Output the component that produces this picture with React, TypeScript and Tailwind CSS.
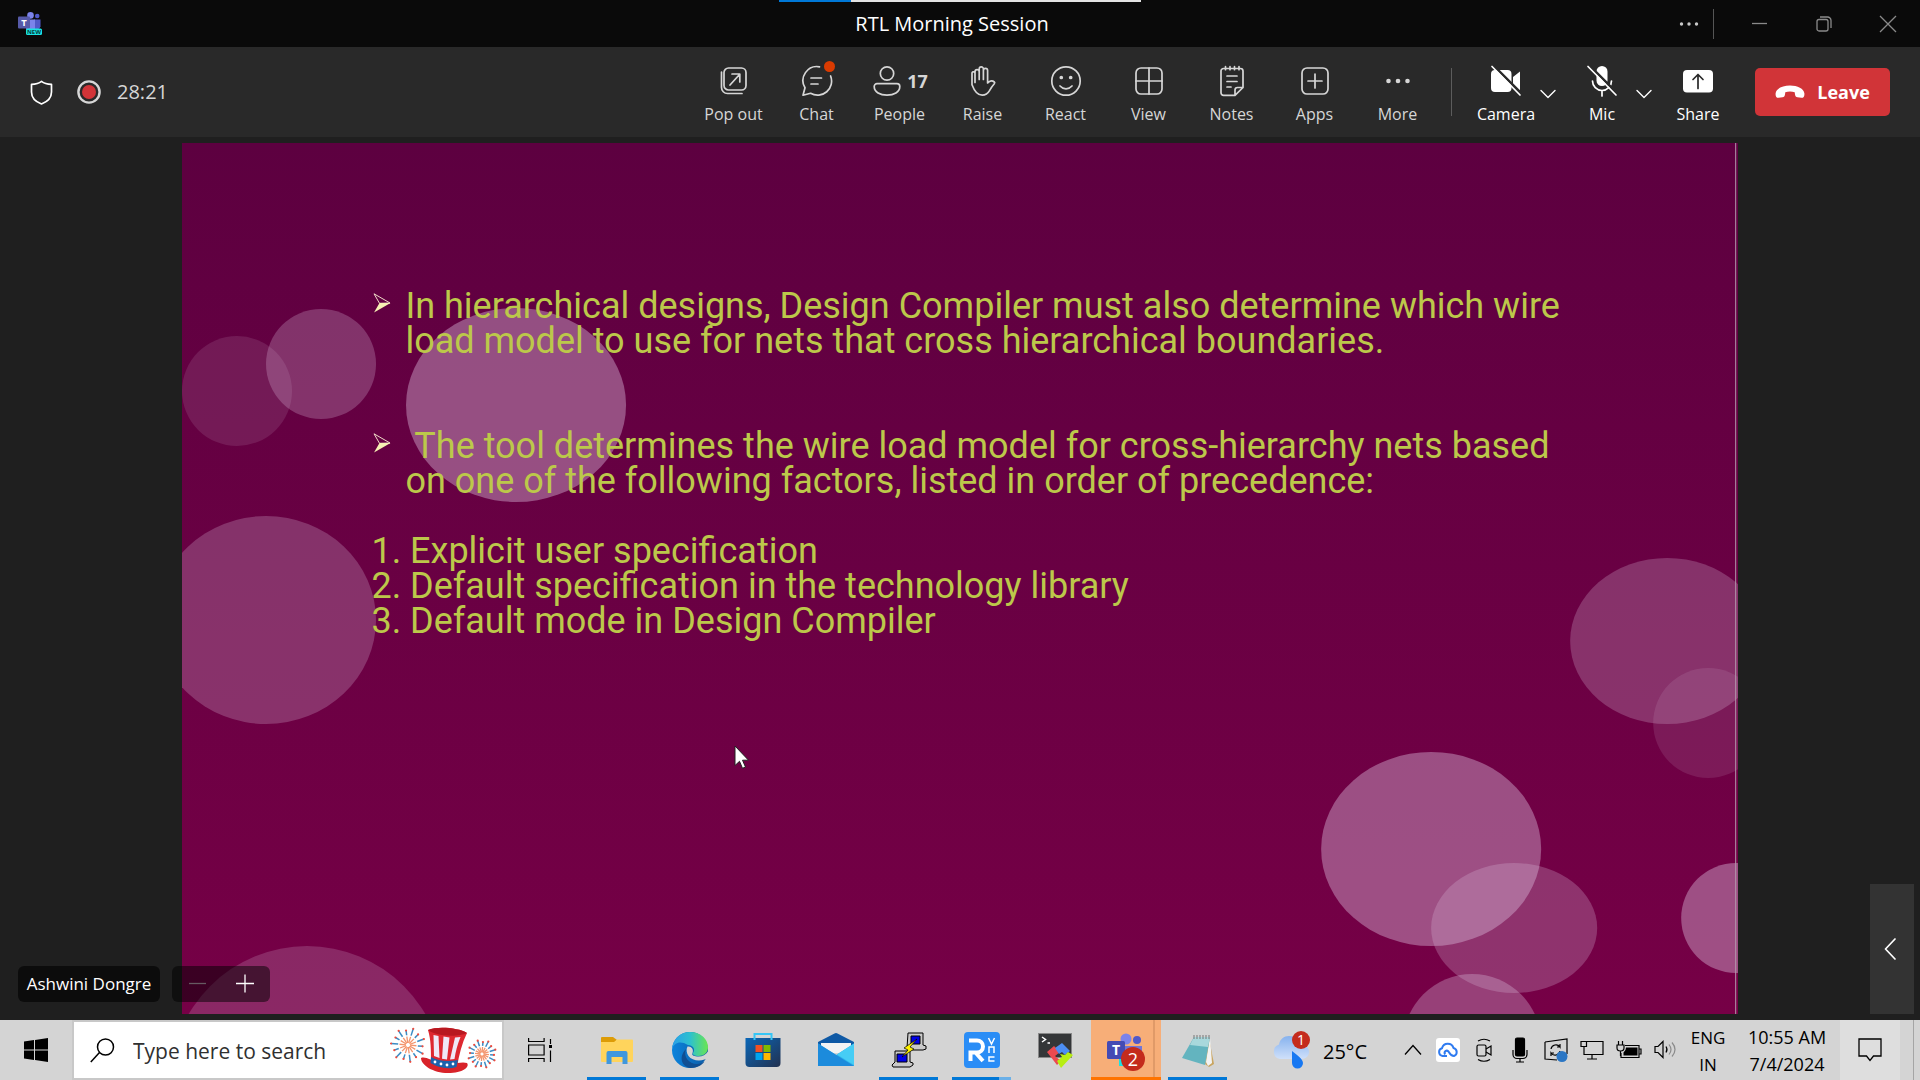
import type { ReactNode } from "react";

const line = {
  fill: "none",
  stroke: "currentColor",
  strokeWidth: 1.7,
  strokeLinecap: "round" as const,
  strokeLinejoin: "round" as const,
};

function Icon({ children }: { children: ReactNode }) {
  return (
    <svg className="h-8 w-8" viewBox="0 0 32 32" aria-hidden="true" {...line}>
      {children}
    </svg>
  );
}

function ToolButton({ label, children }: { label: string; children: ReactNode }) {
  return (
    <button className="flex w-[83px] flex-col items-center gap-[5px] pt-1.5 text-[#d6d6d6]">
      <span className="relative flex h-8 items-center gap-1">{children}</span>
      <span className="text-base leading-6">{label}</span>
    </button>
  );
}

function DeviceButton({ label, menu, children }: { label: string; menu?: string; children: ReactNode }) {
  return (
    <div className="flex items-center text-white">
      <button className="flex w-[60px] flex-col items-center gap-[5px] pt-1.5">
        <span className="flex h-8 items-center">{children}</span>
        <span className="text-base leading-6">{label}</span>
      </button>
      {menu && (
        <button aria-label={menu} className="flex w-6 items-center justify-center pt-1">
          <svg width="16" height="10" viewBox="0 0 16 10" {...line} strokeWidth={1.4}>
            <path d="M1 1.5 8 8.5 15 1.5" />
          </svg>
        </button>
      )}
    </div>
  );
}

function TeamsLogo() {
  return (
    <svg width="25" height="24" viewBox="0 0 25 24" aria-label="Teams" role="img">
      <circle cx="12.5" cy="3.4" r="3.3" fill="#7b83eb" />
      <circle cx="19.2" cy="4" r="2.3" fill="#5059c9" />
      <path d="M16 7.5h6.5v7a4 4 0 0 1-6.5 2z" fill="#5059c9" />
      <path d="M8 7.5h9v9.500a4.600 4.600 0 0 1-9 0z" fill="#7b83eb" />
      <rect x="0" y="4.500" width="12" height="12" rx="1" fill="#565aa8" />
      <text x="6" y="14" textAnchor="middle" fontSize="9.500" fontWeight="700" fill="#fff">T</text>
      <rect x="8" y="16.500" width="16" height="6.500" rx="1.500" fill="#19e3e3" />
      <text x="16" y="22" textAnchor="middle" fontSize="6" fontWeight="700" fill="#063b3b">NEW</text>
    </svg>
  );
}

function TitleBar() {
  return (
    <header className="relative flex h-[47px] items-center bg-[#0a0a0a] text-white">
      <div className="flex flex-1 items-center pl-[18px]">
        <TeamsLogo />
      </div>
      <h1 className="mr-[34px] text-xl leading-6">RTL Morning Session</h1>
      <div className="flex flex-1 items-center justify-end text-[#8a8a8a]">
        <button aria-label="Window options" className="flex w-12 justify-center text-[#c8c8c8]">
          <svg width="20" height="6" viewBox="0 0 20 6" fill="currentColor">
            <circle cx="2.500" cy="3" r="1.700" /><circle cx="10" cy="3" r="1.700" /><circle cx="17.500" cy="3" r="1.700" />
          </svg>
        </button>
        <span className="h-[30px] w-px bg-[#555]" />
        <button aria-label="Minimize" className="ml-[14px] flex w-16 justify-center">
          <svg width="16" height="16" viewBox="0 0 16 16" stroke="currentColor" strokeWidth="1.3"><path d="M0 7.500h15" /></svg>
        </button>
        <button aria-label="Restore" className="flex w-16 justify-center">
          <svg width="16" height="16" viewBox="0 0 16 16" fill="none" stroke="currentColor" strokeWidth="1.3">
            <rect x="1" y="3.500" width="11" height="11.500" rx="2" /><path d="M4 1h7.500a3.500 3.500 0 0 1 3.500 3.500V12" />
          </svg>
        </button>
        <button aria-label="Close" className="flex w-16 justify-center">
          <svg width="18" height="18" viewBox="0 0 18 18" stroke="currentColor" strokeWidth="1.3"><path d="M1 1l16 16M17 1 1 17" /></svg>
        </button>
      </div>
      <div className="absolute inset-x-0 top-0 flex justify-center">
        <span className="h-0.5 w-[72px] bg-[#0078d7]" />
        <span className="h-0.5 w-[290px] bg-[#e3e3e3]" />
      </div>
    </header>
  );
}

function Toolbar() {
  return (
    <nav aria-label="Meeting controls" className="flex h-[90px] items-center bg-[#292929] pr-[30px] pl-[30px] text-[#d6d6d6]">
      <svg width="23" height="25" viewBox="0 0 23 25" {...line} stroke="#fff" aria-hidden="true">
        <path d="M11.500 1.300C9 3.300 5.500 4.200 1.500 4.400V12c0 5.600 4 9.700 10 12 6-2.300 10-6.400 10-12V4.400c-4-.2-7.500-1.100-10-3.100z" />
      </svg>
      <svg className="ml-6" width="24" height="24" viewBox="0 0 24 24" aria-label="Recording" role="img">
        <circle cx="12" cy="12" r="10.600" fill="none" stroke="#d6d6d6" strokeWidth="2.400" />
        <circle cx="12" cy="12" r="7" fill="#d13438" />
      </svg>
      <time className="ml-4 text-xl leading-6">28:21</time>

      <div className="ml-auto flex items-center">
        <ToolButton label="Pop out">
          <Icon>
            <rect x="6" y="3" width="22" height="22" rx="4.500" />
            <path d="M3.500 7v15.500a6 6 0 0 0 6 6H24M12 20l9.500-10.500M14 9h7.800v8" />
          </Icon>
        </ToolButton>
        <ToolButton label="Chat">
          <Icon>
            <path d="M18.500 1.800A14 14 0 0 0 4 22.800L2 30.200l7.600-1.900A14 14 0 0 0 29.600 11M10 13h10.500M10 19h7" />
          </Icon>
          <span className="absolute -top-1 -right-0.5 h-[11px] w-[11px] rounded-full bg-[#da3b01]" />
        </ToolButton>
        <ToolButton label="People">
          <Icon>
            <circle cx="16" cy="8.500" r="6.700" />
            <path d="M6 18.700h20a2.800 2.800 0 0 1 2.800 2.800c0 5.500-6 8.700-12.800 8.700S3.200 27 3.200 21.500A2.800 2.800 0 0 1 6 18.700z" />
          </Icon>
          <span className="text-lg leading-6 font-bold">17</span>
        </ToolButton>
        <ToolButton label="Raise">
          <Icon>
            <path d="M8.500 17.500V6.800a2.100 2.100 0 0 1 4.200 0V4a2.100 2.100 0 0 1 4.200 0v1.500a2.100 2.100 0 0 1 4.200 0v12.500c1.500-1.800 4.300-3 6.700-1 .6.500.4 1.200 0 1.700-1.800 2-3.200 4-4.800 7-1.800 3.200-4.200 4.500-7.300 4.500-5.200 0-7.700-3.800-10.200-10.500V8.600a1.500 1.500 0 0 1 3-.6M12.700 6.500v8M16.900 5.500v9M21.100 8v10" transform="translate(-.5 0)" />
          </Icon>
        </ToolButton>
        <ToolButton label="React">
          <Icon>
            <circle cx="16" cy="16" r="14.200" />
            <path d="M10 21c3.200 3.700 8.800 3.700 12 0" />
            <circle cx="11.300" cy="12.500" r="1" fill="currentColor" /><circle cx="20.700" cy="12.500" r="1" fill="currentColor" />
          </Icon>
        </ToolButton>
        <ToolButton label="View">
          <Icon>
            <rect x="3" y="3" width="26" height="26" rx="5" /><path d="M16 3v26M3 16h26" />
          </Icon>
        </ToolButton>
        <ToolButton label="Notes">
          <Icon>
            <path d="M7.500 3.500h17a2.500 2.500 0 0 1 2.500 2.500v16.500L19 30.300H7.500A2.500 2.500 0 0 1 5 27.800V6a2.500 2.500 0 0 1 2.500-2.500zM27 22.500h-5.500a2.500 2.500 0 0 0-2.500 2.500v5M9.500 1.700v3M14 1.700v3M18.500 1.700v3M23 1.700v3M11 11h10M11 16.500h10M11 22h4" />
          </Icon>
        </ToolButton>
        <ToolButton label="Apps">
          <Icon>
            <rect x="3" y="3" width="26" height="26" rx="5" /><path d="M16 9v14M9 16h14" />
          </Icon>
        </ToolButton>
        <ToolButton label="More">
          <Icon>
            <g fill="currentColor" stroke="none"><circle cx="6.500" cy="16" r="2.300" /><circle cx="16" cy="16" r="2.300" /><circle cx="25.500" cy="16" r="2.300" /></g>
          </Icon>
        </ToolButton>

        <span className="ml-3 h-12 w-px bg-[#5c5c5c]" />

        <div className="ml-6 flex items-center gap-3">
          <DeviceButton label="Camera" menu="Camera options">
            <Icon>
              <path d="M5 5h12.500A4 4 0 0 1 21.500 9v14a4 4 0 0 1-4 4H5a4 4 0 0 1-4-4V9a4 4 0 0 1 4-4zM23 12l7-5.500v19L23 20z" fill="#fff" stroke="none" />
              <path d="M3.500.5 32 29" stroke="#292929" strokeWidth="2.500" /><path d="M2 1.500 30 30" />
            </Icon>
          </DeviceButton>
          <DeviceButton label="Mic" menu="Microphone options">
            <Icon>
              <rect x="10.500" y="1" width="11" height="20" rx="5.500" fill="#fff" stroke="none" />
              <path d="M6.500 16a9.500 9.500 0 0 0 19 0M16 26v5" />
              <path d="M3.500.5 32 29" stroke="#292929" strokeWidth="2.500" /><path d="M2 1.500 30 30" />
            </Icon>
          </DeviceButton>
          <DeviceButton label="Share">
            <Icon>
              <rect x="1" y="5" width="30" height="22.500" rx="4" fill="#fff" stroke="none" />
              <path d="M16 23.500V10M11 14.500l5-5 5 5" stroke="#292929" />
            </Icon>
          </DeviceButton>
        </div>

        <button className="ml-[27px] flex h-12 w-[135px] items-center justify-center gap-3 rounded-[5px] bg-[#d13438] text-white">
          <svg width="30" height="14" viewBox="0 0 30 14" fill="currentColor" aria-hidden="true">
            <path d="M15 .5C7.500.5 1 3.500.6 8.500c-.2 3 .9 4.400 3 4.300l3.900-.6c1.500-.3 2.300-1.200 2.500-2.800l.3-2.200c2.800-1 6.600-1 9.400 0l.3 2.200c.2 1.600 1 2.500 2.500 2.800l3.900.6c2.100.1 3.200-1.300 3-4.300C29 3.500 22.500.5 15 .5z" />
          </svg>
          <span className="text-lg leading-6 font-bold">Leave</span>
        </button>
      </div>
    </nav>
  );
}

function Bullet() {
  return (
    <svg className="mt-1 h-5 w-[34px] shrink-0" viewBox="0 0 34 20" aria-hidden="true">
      <path d="M3 .8 19 10 8.500 10.300z" fill="none" stroke="#f0d9c8" strokeWidth="1" />
      <path d="M8.500 10 19.500 10 3 19.500z" fill="#f6efb4" />
    </svg>
  );
}

function Slide() {
  return (
    <article className="relative mx-auto w-[81%] flex-1 overflow-hidden bg-linear-to-b from-[#5d0040] to-[#760046]">
      <svg className="absolute inset-0 h-full w-full" viewBox="0 0 1555 871" preserveAspectRatio="none" aria-hidden="true">
        <g fill="#d8b8d8">
          <circle cx="55" cy="248" r="55" fillOpacity=".14" />
          <circle cx="139" cy="221" r="55" fillOpacity=".28" />
          <ellipse cx="334" cy="262" rx="110" ry="97" fillOpacity=".43" />
          <ellipse cx="84" cy="477" rx="110" ry="104" fillOpacity=".27" />
          <circle cx="125" cy="940" r="137" fillOpacity=".22" />
          <ellipse cx="1485" cy="498" rx="97" ry="83" fillOpacity=".27" />
          <circle cx="1526" cy="580" r="55" fillOpacity=".14" />
          <ellipse cx="1249" cy="706" rx="110" ry="97" fillOpacity=".43" />
          <ellipse cx="1332" cy="785" rx="83" ry="65" fillOpacity=".28" />
          <circle cx="1554" cy="775" r="55" fillOpacity=".43" />
          <circle cx="1290" cy="900" r="69" fillOpacity=".35" />
        </g>
        <path d="M1553.500 0v871" stroke="#b49aac" />
      </svg>
      <div className="relative pt-[146px] pl-[189px] font-[Roboto,sans-serif] text-4xl leading-[35px] text-[#bcc84a]">
        <ul>
          <li className="flex">
            <Bullet />
            <p>
              In hierarchical designs, Design Compiler must also determine which wire
              <br />
              load model to use for nets that cross hierarchical boundaries.
            </p>
          </li>
          <li className="mt-[70px] flex">
            <Bullet />
            <p>
              &nbsp;The tool determines the wire load model for cross-hierarchy nets based
              <br />
              on one of the following factors, listed in order of precedence:
            </p>
          </li>
        </ul>
        <ol className="mt-[35px]">
          <li>1. Explicit user specification</li>
          <li>2. Default specification in the technology library</li>
          <li>3. Default mode in Design Compiler</li>
        </ol>
      </div>
      <svg className="absolute top-[602px] left-[552px]" width="15" height="25" viewBox="0 0 15 25" aria-hidden="true">
        <path d="M1 1v19.500l4.500-4.200 3 7 3-1.300-3-6.800h6z" fill="#fff" stroke="#222" strokeWidth="1" />
      </svg>
    </article>
  );
}

function Stage() {
  return (
    <main className="relative flex flex-1 flex-col bg-[#1f1f1f] py-1.5">
      <Slide />
      <div className="absolute bottom-[18px] left-[18px] flex gap-3 text-white">
        <div className="flex h-9 w-[142px] items-center justify-center rounded-md bg-black/60 text-[17px]">Ashwini Dongre</div>
        <div className="flex h-9 w-[98px] items-center justify-between rounded-md bg-black/50 px-[15px]">
          <button aria-label="Zoom out" className="text-[#665a62]">
            <svg width="20" height="20" viewBox="0 0 20 20" stroke="currentColor" strokeWidth="1.300"><path d="M2 9.500h17" /></svg>
          </button>
          <button aria-label="Zoom in">
            <svg width="20" height="20" viewBox="0 0 20 20" stroke="currentColor" strokeWidth="1.300"><path d="M1 9.500h18M10 .5v18" /></svg>
          </button>
        </div>
      </div>
      <button aria-label="Show participants" className="absolute right-1.5 bottom-1.5 flex h-[130px] w-11 items-center justify-center bg-[#333] pr-1 text-white">
        <svg width="12" height="22" viewBox="0 0 12 22" {...line}><path d="M11 1 1.500 11 11 21" /></svg>
      </button>
    </main>
  );
}

function Task({ label, active, children }: { label: string; active?: boolean; children: ReactNode }) {
  return (
    <button aria-label={label} className="flex h-[60px] w-[73px] flex-col items-center">
      <span className="flex flex-1 items-center pt-0.5">{children}</span>
      <span className={active ? "h-[3px] w-[59px] bg-[#0078d7]" : "h-[3px] w-[59px]"} />
    </button>
  );
}

function Burst({ x, y, r, n }: { x: number; y: number; r: number; n: number }) {
  return (
    <g>
      {Array.from({ length: n }, (_, i) => {
        const a = ((i + 0.2) * 2 * Math.PI) / n;
        const c = Math.cos(a);
        const s = Math.sin(a);
        const out = i % 2 ? r : r * 0.86;
        return (
          <g key={i}>
            <path d={`M${x + c * r * 0.12} ${y + s * r * 0.12}L${x + c * r * 0.5} ${y + s * r * 0.5}`} stroke="#f4946c" strokeWidth="1.3" />
            <path d={`M${x + c * r * 0.58} ${y + s * r * 0.58}L${x + c * out} ${y + s * out}`} stroke="#3c8cc4" strokeWidth="1.5" />
            <circle cx={x + c * out} cy={y + s * out} r="1.100" fill="#f04a3c" />
          </g>
        );
      })}
    </g>
  );
}

function HolidayArt() {
  return (
    <svg className="mr-1" width="108" height="48" viewBox="0 0 108 48" aria-hidden="true">
      <Burst x={18} y={19} r={17} n={14} />
      <Burst x={92} y={28} r={14} n={16} />
      <path d="M31 32c5-2 9 3 21 5 13 2 19-2 25 0 3 4-4 10-19 10C43 47 31 39 31 32z" fill="#d8232a" />
      <path d="M38 4c10-4 31-2 39 3-5 10-8 22-10 34-9 2-19 0-26-5 0-12 0-22-3-32z" fill="#de2830" />
      <path d="M43.500 9l5 1 1 22-5.500-2zM53.500 10.500l6 1-2.500 22-5-.8zM65 11.500l5.500-.5c-3 7-5 15-6 22l-4.500.6z" fill="#efe8f6" />
      <path d="M38 4c10-4 31-2 39 3-8 4-30 4-39-3z" fill="#b81820" />
      <path d="M41 31c7 4 17 5 27 3l-1.500 7c-9 3-19 0-26-4z" fill="#1c62ac" />
      <g fill="#fff"><circle cx="45" cy="36" r="1.400" /><circle cx="51" cy="38" r="1.400" /><circle cx="57" cy="39" r="1.400" /><circle cx="63" cy="38" r="1.400" /></g>
    </svg>
  );
}

function Taskbar() {
  return (
    <footer className="flex h-[60px] items-center bg-[#d4d4d4] text-black">
      <button aria-label="Start" className="flex h-full w-[72px] items-center justify-center">
        <svg width="24" height="24" viewBox="0 0 24 24"><path d="M0 3.400 10 2v9.500H0zM11 1.900 24 0v11.500H11zM0 12.500h10V22L0 20.600zM11 12.500h13V24l-13-1.900z" /></svg>
      </button>
      <label className="flex h-full w-[432px] items-center border-2 border-[#c8c8c8] bg-white pl-4">
        <svg width="25" height="25" viewBox="0 0 25 25" fill="none" stroke="#000" strokeWidth="1.500" aria-hidden="true">
          <circle cx="15.500" cy="9" r="8" /><path d="M9.500 14.500 .8 24" />
        </svg>
        <input
          aria-label="Search"
          placeholder="Type here to search"
          className="ml-4 w-0 flex-1 bg-transparent pt-1 pl-0.5 text-[21px] outline-none placeholder:text-[#303030]"
        />
        <HolidayArt />
      </label>
      <button aria-label="Task view" className="flex h-full w-[76px] items-center justify-center pr-1">
        <svg width="24" height="24" viewBox="0 0 24 24" fill="none" stroke="#000" strokeWidth="1.200">
          <path d="M.6 0v3.500h15.500V0M.6 7h15.500v10H.6zM.6 24v-3.500h15.500V24M22.500 1v5M22.500 12.500V24" /><path d="M21 7h3.500v3H21z" fill="#000" stroke="none" />
        </svg>
      </button>

      <Task label="File Explorer" active>
        <svg width="32" height="28" viewBox="0 0 32 28">
          <path d="M1 1h11l4 3-3 3H0V2a1 1 0 0 1 1-1z" fill="#dd9c07" />
          <path d="M0 6h13l3-2.500h15a1 1 0 0 1 1 1V25a1 1 0 0 1-1 1H1a1 1 0 0 1-1-1z" fill="#ffd45c" />
          <path d="M5.500 28V17a2 2 0 0 1 2-2h17a2 2 0 0 1 2 2v11h-5v-7h-11v7z" fill="#3f97dd" />
        </svg>
      </Task>
      <Task label="Edge" active>
        <svg width="36" height="36" viewBox="0 0 36 36">
          <defs>
            <linearGradient id="edge-top" x1="0" x2="1"><stop stopColor="#2b9fe8" /><stop offset=".5" stopColor="#2dc0cf" /><stop offset="1" stopColor="#6ae650" /></linearGradient>
            <linearGradient id="edge-low" x1="0" x2="1"><stop stopColor="#0b83dc" /><stop offset="1" stopColor="#0c5ba6" /></linearGradient>
          </defs>
          <circle cx="18" cy="18" r="18" fill="url(#edge-low)" />
          <path d="M0 17C1 7 8 0 18 0c11 0 18 7.500 18 15 0 6-4.500 9-9.500 9-4 0-6.500-1.500-5.500-3 3-4-.5-8-5-8C8 8 2 11 0 17z" fill="url(#edge-top)" />
          <path d="M14 17c-3 8 3 15 11 15 3 0 5.500-1 7.500-2.500-2 3-7 6.500-14 6.500C10 35 6 25 14 17z" fill="#104f92" />
          <path d="M15.500 14.500c4-.5 6.500 3 5 6.500-1.200 2.700 2 3.500 6 3.500 4 0 7.500-2 9.500-5V26l-3.500 1.500c-6 2.500-13 .5-16-3.500-2-3-2.500-6.500-1-9.500z" fill="#d4d4d4" />
        </svg>
      </Task>
      <Task label="Microsoft Store">
        <svg width="36" height="36" viewBox="0 0 36 36">
          <defs><linearGradient id="store" x1="0" y1="0" x2="1" y2="1"><stop stopColor="#0a67b8" /><stop offset="1" stopColor="#223150" /></linearGradient></defs>
          <path d="M.5 6h35v25a4 4 0 0 1-4 4h-27a4 4 0 0 1-4-4z" fill="url(#store)" />
          <path d="M9.500 8V2h17v6" fill="none" stroke="#35c5f5" strokeWidth="2" />
          <path d="M10.500 13h7v7h-7z" fill="#f25022" /><path d="M18.500 13h7v7h-7z" fill="#7fba00" />
          <path d="M10.500 21h7v7h-7z" fill="#00a4ef" /><path d="M18.500 21h7v7h-7z" fill="#ffb900" />
        </svg>
      </Task>
      <Task label="Mail">
        <svg width="36" height="36" viewBox="0 0 36 36">
          <path d="M0 10 16.500 1.500a3 3 0 0 1 3 0L36 10v6H0z" fill="#0f59a5" /><path d="M3 11h30v10H3z" fill="#f3f3f3" />
          <path d="M0 11.500 18 23l18-11.500V34H0z" fill="#2fb6ec" /><path d="M0 11.500 36 34H0z" fill="#1c8bdc" /><path d="M19 22.500 36 11.500V33z" fill="#46cdf5" />
        </svg>
      </Task>
      <Task label="PuTTY" active>
        <svg width="36" height="36" viewBox="0 0 36 36" stroke="#000">
          <path d="M17 1h15v12l3 1v3l-3 1H19l-3-2z" fill="#c9c9c9" /><path d="M20 4h9v8h-9z" fill="#0000e8" />
          <path d="M4 19h15v11l3 1v2l-3 2H2l-1-2 3-3z" fill="#c9c9c9" /><path d="M6 22h10v8H6z" fill="#0000e8" />
          <path d="m26 7-13 9 4 2-6 7 12-8-4-2z" fill="#fff200" strokeWidth=".7" />
        </svg>
      </Task>
      <button aria-label="VNC Viewer" className="flex h-[60px] w-[73px] flex-col items-center">
        <span className="flex flex-1 items-center pt-0.5">
          <svg width="36" height="36" viewBox="0 0 36 36">
            <rect width="36" height="36" rx="4" fill="#2a8df6" />
            <g fill="none" stroke="#fff"><path d="M5 8.500h8a5.500 5.500 0 0 1 0 12H6.500V29M11 20l8 9" strokeWidth="4" /><path d="m24.500 6 3 6 3-6M25 21v-6h5v6M30.500 25H25v4h5.500" strokeWidth="1.500" /></g>
          </svg>
        </span>
        <span className="flex h-[3px] w-[59px] bg-[#6bb0e8]"><span className="w-[47px] bg-[#0078d7]" /></span>
      </button>
      <Task label="MobaXterm">
        <svg width="36" height="36" viewBox="0 0 36 36">
          <rect x="1.500" y="1.500" width="33" height="24" fill="#343638" stroke="#888" /><path d="m5 5 3.500 2.500L5 10M10.500 11H13" fill="none" stroke="#fff" strokeWidth="1.500" />
          <path d="m10 20 7-6 6 6-5 4 6 5-4 4z" fill="#ec4a50" /><path d="m18 16 7-5 8 8-5 4-3-3-3 2z" fill="#4c8df2" /><path d="m20 29 5-4-2-3 5 1 3-3 5 3-12 13z" fill="#b7ee12" />
        </svg>
      </Task>
      <button aria-label="Teams, 2 notifications" className="flex h-[60px] w-[70px] border-b-[3px] border-[#ff7300] bg-[#f7ae78]">
        <span className="relative flex h-full w-16 items-center justify-center border-r-2 border-r-[#e09a68] pt-1 pl-2">
          <svg width="38" height="36" viewBox="0 0 38 36">
            <circle cx="19" cy="6" r="5.500" fill="#7b83eb" /><circle cx="30" cy="7" r="4" fill="#5059c9" />
            <path d="M17 13h18v12H17z" fill="#7176d6" /><path d="M12 23h12v10H12z" fill="#19e3e3" />
            <rect y="8" width="18" height="18" rx="1.500" fill="#444bb4" />
            <text x="9" y="22" textAnchor="middle" fontSize="14" fontWeight="700" fill="#fff">T</text>
          </svg>
          <span className="absolute right-2 bottom-1.5 flex h-6 w-6 items-center justify-center rounded-full bg-[#c42b1c] text-lg leading-6 text-white">2</span>
        </span>
      </button>
      <Task label="Notepad" active>
        <svg width="34" height="34" viewBox="0 0 34 34">
          <path d="m28 5 5 26-5 3-4-3z" fill="#c9a560" /><path d="m29 4 2 26-4 3-2-4z" fill="#f2f2f2" />
          <path d="M13 4h16l-5 28L1 25z" fill="#63b4bf" /><path d="M13 4h16l-2 10L9 12z" fill="#a8d8dc" />
          <path d="M13 2v4M16 2v4M19 2v4M22 2v4M25 2v4M28 2v4" stroke="#777" />
        </svg>
      </Task>

      <div className="ml-auto flex h-full items-center">
        <button aria-label="Weather, 25 degrees" className="flex items-center">
          <span className="relative">
            <svg width="38" height="38" viewBox="0 0 38 38">
              <defs><linearGradient id="cloud" x1="0" y1="0" x2="0" y2="1"><stop stopColor="#86b2ee" /><stop offset="1" stopColor="#cfe0fa" /></linearGradient></defs>
              <path d="M8 28a7.500 7.500 0 0 1-1-14.500C8 8 12 5 17 5c7 0 11 4 12 9 5 0 8 3 8 7s-3 7-8 7z" fill="url(#cloud)" />
              <path d="M20 20c5 4 11 8 11 12a5.500 5.500 0 0 1-11 0z" fill="#1778f2" />
            </svg>
            <span className="absolute top-0 right-0 flex h-[18px] w-[18px] items-center justify-center rounded-full bg-[#c42b1c] text-sm leading-4 text-white">1</span>
          </span>
          <span className="ml-2 w-[54px] pt-1 text-xl leading-6">25°C</span>
        </button>
        <button aria-label="Show hidden icons" className="mr-3.5 ml-8">
          <svg width="18" height="12" viewBox="0 0 18 12" fill="none" stroke="#000" strokeWidth="1.300"><path d="m1 10.500 8-9 8 9" /></svg>
        </button>
        <div className="flex items-center gap-3">
          <svg width="24" height="24" viewBox="0 0 24 24" fill="none" stroke="#2f7bf0" strokeWidth="2">
            <rect width="24" height="24" rx="3" fill="#fff" stroke="none" />
            <path d="M11 18H6.500A4 4 0 0 1 6 10.200 6 6 0 0 1 17.500 10a4.200 4.200 0 0 1 .5 8c-3 0-4-2-5.500-4.500-2-2-5 0-3.500 3" />
          </svg>
          <svg width="24" height="24" viewBox="0 0 24 24" fill="none" stroke="#000" strokeWidth="1.200"><rect x="5" y="7" width="9" height="11" rx="1.500" /><path d="m14 11 5-3v9l-5-3M6 3q6-3.500 12 0M6 21.500q6 3.500 12 0" /></svg>
          <svg width="24" height="26" viewBox="0 0 24 26" stroke="#000" strokeWidth="1.200"><rect x="7.500" y="1" width="9" height="18" rx="1.500" /><path d="M5 13v4.500a4 4 0 0 0 4 4h6a4 4 0 0 0 4-4V13M12 21.500V25M8 25h8" fill="none" /></svg>
          <svg width="24" height="24" viewBox="0 0 24 24" fill="none" stroke="#000" strokeWidth="1.200"><path d="M1 4 23 1v15M1 4v17l12 1M7 11a5 5 0 0 1 9-2V6M16 9h-3M16 13a5 5 0 0 1-9 2v3M7 15h3" /><circle cx="18" cy="18.500" r="5.500" fill="#2b76c4" stroke="none" /></svg>
          <svg width="24" height="24" viewBox="0 0 24 24" fill="none" stroke="#000" strokeWidth="1.200"><path d="M6 3.500h17v13H4V11M12 16.500V21M7 21h10M1 3.500h5.500v5H1zM4 8.500V12" /></svg>
          <svg width="26" height="24" viewBox="0 0 26 24" fill="none" stroke="#000" strokeWidth="1.200"><path d="M9 7.500h14v12H5V15M23.500 11h1.500v5h-1.500M2.500 3v4M6.500 3v4M1 7h7v3q0 3-3.500 3T1 10zM4.500 13v5" /><path d="M10 9.500h11.500v8H7.500v-3q2.500-2 2.500-5z" fill="#000" stroke="none" /></svg>
          <svg width="24" height="24" viewBox="0 0 24 24" fill="none" stroke="#000" strokeWidth="1.200"><path d="M1 8.500h3l5-5v16l-5-5H1zM12 8.500q2 3 0 6" /><path d="M15 6.500q4 5 0 10M18 4.500q6 7 0 14" stroke="#8b8b8b" /></svg>
        </div>
        <button className="ml-1.5 flex w-12 flex-col items-center pt-0.5 text-[17px] leading-[27px]"><span>ENG</span><span>IN</span></button>
        <button className="ml-1.5 flex w-[98px] flex-col items-center pt-0.5 text-lg leading-[27px]"><span>10:55 AM</span><span>7/4/2024</span></button>
        <button aria-label="Notifications" className="ml-1 flex h-full w-[60px] items-center justify-center bg-[#dedede]">
          <svg width="24" height="24" viewBox="0 0 24 24" fill="none" stroke="#000" strokeWidth="1.300"><path d="M1 1h22v17h-7.500L12 22.500 8.500 18H1z" /></svg>
        </button>
        <span className="ml-[13px] h-full w-px bg-[#a5a5a5]" />
        <button aria-label="Show desktop" className="h-full w-1.5" />
      </div>
    </footer>
  );
}

export default function App() {
  return (
    <div className="flex min-h-screen flex-col overflow-hidden bg-[#1f1f1f] font-['Open_Sans','Noto_Sans',sans-serif]">
      <TitleBar />
      <Toolbar />
      <Stage />
      <Taskbar />
    </div>
  );
}
